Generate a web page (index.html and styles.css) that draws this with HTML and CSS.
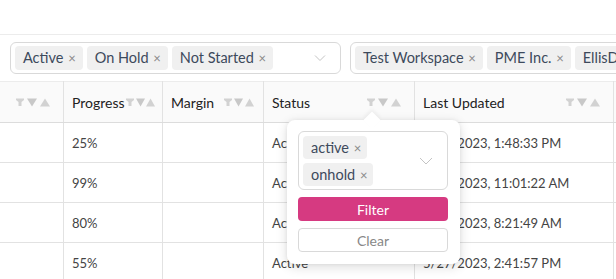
FILE: index.html
```html
<!DOCTYPE html>
<html>
<head>
<meta charset="utf-8">
<link rel="stylesheet" href="styles.css">
</head>
<body>
<div class="topbar"></div>
<div class="filters">
  <div class="select first">
    <span class="tag">Active <span class="x">×</span></span>
    <span class="tag">On Hold <span class="x">×</span></span>
    <span class="tag">Not Started <span class="x">×</span></span>
    <svg class="chev" width="12" height="8" viewBox="0 0 12 8"><path d="M1 1.5 L6 6.5 L11 1.5" fill="none" stroke="#c4c4c4" stroke-width="1"/></svg>
  </div>
  <div class="select second">
    <span class="tag">Test Workspace <span class="x">×</span></span>
    <span class="tag">PME Inc. <span class="x">×</span></span>
    <span class="tag">EllisDon <span class="x">×</span></span>
  </div>
</div>
<table class="grid">
  <thead>
    <tr>
      <th class="c1"><div class="th"><span></span><span class="icons"><svg width="40" height="10" viewBox="0 0 40 10"><path d="M1 1.5h8v1.5l-2.5 2v4h-3v-4l-2.5-2z" fill="#d2d2d2"/><path d="M12 1.5h10l-5 8z" fill="#c8c8c8"/><path d="M25 9.5h10l-5-8z" fill="#d2d2d2"/></svg></span></div></th>
      <th class="c2"><div class="th"><span>Progress</span><span class="icons"><svg width="30" height="10" viewBox="0 0 30 10"><path d="M0 1.5h8v1.5l-2.5 2v4h-3v-4l-2.5-2z" fill="#d2d2d2"/><path d="M10 1.5h9l-4.5 8z" fill="#c8c8c8"/><path d="M20 9.5h9l-4.5-8z" fill="#d2d2d2"/></svg></span></div></th>
      <th class="c3"><div class="th"><span>Margin</span><span class="icons"><svg width="32" height="10" viewBox="0 0 32 10"><path d="M1 1.5h8v1.5l-2.5 2v4h-3v-4l-2.5-2z" fill="#d2d2d2"/><path d="M11 1.5h9l-4.5 8z" fill="#c8c8c8"/><path d="M22 9.5h9l-4.5-8z" fill="#d2d2d2"/></svg></span></div></th>
      <th class="c4"><div class="th"><span>Status</span><span class="icons"><svg width="40" height="10" viewBox="0 0 40 10"><path d="M1 1.5h8v1.5l-2.5 2v4h-3v-4l-2.5-2z" fill="#d2d2d2"/><path d="M12 1.5h10l-5 8z" fill="#c8c8c8"/><path d="M25 9.5h10l-5-8z" fill="#d2d2d2"/></svg></span></div></th>
      <th class="c5"><div class="th"><span>Last Updated</span><span class="icons"><svg width="40" height="10" viewBox="0 0 40 10"><path d="M1 1.5h8v1.5l-2.5 2v4h-3v-4l-2.5-2z" fill="#d2d2d2"/><path d="M12 1.5h10l-5 8z" fill="#c8c8c8"/><path d="M25 9.5h10l-5-8z" fill="#d2d2d2"/></svg></span></div></th>
      <th class="c6"></th>
    </tr>
  </thead>
  <tbody>
    <tr><td></td><td>25%</td><td></td><td>Active</td><td>5/30/2023, 1:48:33 PM</td><td></td></tr>
    <tr><td></td><td>99%</td><td></td><td>Active</td><td>5/29/2023, 11:01:22 AM</td><td></td></tr>
    <tr><td></td><td>80%</td><td></td><td>Active</td><td>5/28/2023, 8:21:49 AM</td><td></td></tr>
    <tr><td></td><td>55%</td><td></td><td>Active</td><td>5/27/2023, 2:41:57 PM</td><td></td></tr>
  </tbody>
</table>
<div class="popup">
  <div class="pselect">
    <div class="ptags">
      <span class="tag">active <span class="x">×</span></span>
      <span class="tag">onhold <span class="x">×</span></span>
    </div>
    <svg class="pchev" width="14" height="8" viewBox="0 0 14 8"><path d="M1 1 L7 7 L13 1" fill="none" stroke="#c4c4c4" stroke-width="1"/></svg>
  </div>
  <button class="btn primary">Filter</button>
  <button class="btn ghost">Clear</button>
</div>
</body>
</html>
```
FILE: styles.css
```css
html, body {
  margin: 0;
  padding: 0;
  background: #fff;
  font-family: Lato, "Open Sans", sans-serif;
  color: #333;
  overflow: hidden;
  width: 616px;
  height: 279px;
  position: relative;
}
.topbar {
  height: 34px;
  border-bottom: 1px solid #ececec;
}
.filters {
  display: flex;
  gap: 9px;
  padding: 7px 0 0 10px;
  height: 39px;
  box-sizing: border-box;
  overflow: hidden;
  white-space: nowrap;
}
.select {
  flex: none;
  height: 32px;
  box-sizing: border-box;
  border: 1px solid #d9d9d9;
  border-radius: 6px;
  display: flex;
  align-items: center;
  gap: 4px;
  padding: 0 4px;
}
.select.first { width: 331px; }
.select.second { width: 300px; }
.chev { margin-left: auto; margin-right: 10px; }
.tag {
  background: #f0f0f0;
  border-radius: 4px;
  height: 24px;
  line-height: 24px;
  padding: 0 7px 0 8px;
  font-size: 14.5px;
  color: #3d4a5c;
  flex: none;
}
.tag .x {
  color: #888;
  font-size: 13px;
  margin-left: 1px;
}
.grid {
  border-collapse: collapse;
  table-layout: fixed;
  width: 640px;
  margin-top: 7px;
}
.grid th, .grid td {
  border: 1px solid #e2e2e2;
  border-top: none;
  padding: 0 8px;
  text-align: left;
  white-space: nowrap;
  overflow: hidden;
}
.grid th:first-child, .grid td:first-child { border-left: none; }
.grid thead tr { border-top: 1px solid #ececec; }
.grid th {
  height: 40px;
  background: #fafafa;
  font-weight: normal;
  font-size: 14px;
  color: #222;
  border-bottom: 1px solid #dcdcdc;
}
.grid td {
  height: 39px;
  font-size: 13px;
  color: #444;
}
.th {
  display: flex;
  align-items: center;
  justify-content: space-between;
}
.icons { display: flex; align-items: center; }
.c1 { width: 47px; }
.c2 { width: 84px; }
.c3 { width: 84px; }
.c4 { width: 134px; }
.c5 { width: 182px; }
.c6 { width: 40px; }
.grid th.c2 { padding-right: 6px; }
.grid th.c3 { padding-right: 8px; }
.popup {
  position: absolute;
  left: 287px;
  top: 120px;
  width: 173px;
  height: 144px;
  box-sizing: border-box;
  background: #fff;
  border-radius: 8px;
  box-shadow: 0 3px 12px rgba(0,0,0,0.14), 0 0 4px rgba(0,0,0,0.06);
  padding: 11px 12px 0 11px;
  display: flex;
  flex-direction: column;
}
.popup::before {
  content: "";
  position: absolute;
  left: 79px;
  top: -6px;
  width: 12px;
  height: 12px;
  background: #fff;
  transform: rotate(45deg);
  box-shadow: -2px -2px 4px rgba(0,0,0,0.05);
}
.pselect {
  position: relative;
  border: 1px solid #d9d9d9;
  border-radius: 6px;
  height: 59px;
  box-sizing: border-box;
  display: flex;
  align-items: center;
  padding: 0 4px;
  background: #fff;
}
.ptags {
  display: flex;
  flex-direction: column;
  align-items: flex-start;
  gap: 4px;
}
.ptags .tag { height: 23px; line-height: 23px; padding: 0 6px 0 8px; }
.pchev { margin-left: auto; margin-right: 10px; }
.btn {
  font-family: Lato, "Open Sans", sans-serif;
  font-size: 14px;
  width: 150px;
  height: 24px;
  border-radius: 4px;
  padding: 0;
  cursor: pointer;
}
.primary {
  margin-top: 7px;
  background: #d63a81;
  border: none;
  color: #fff;
}
.ghost {
  margin-top: 7px;
  background: #fff;
  border: 1px solid #d9d9d9;
  color: #888;
}
```
